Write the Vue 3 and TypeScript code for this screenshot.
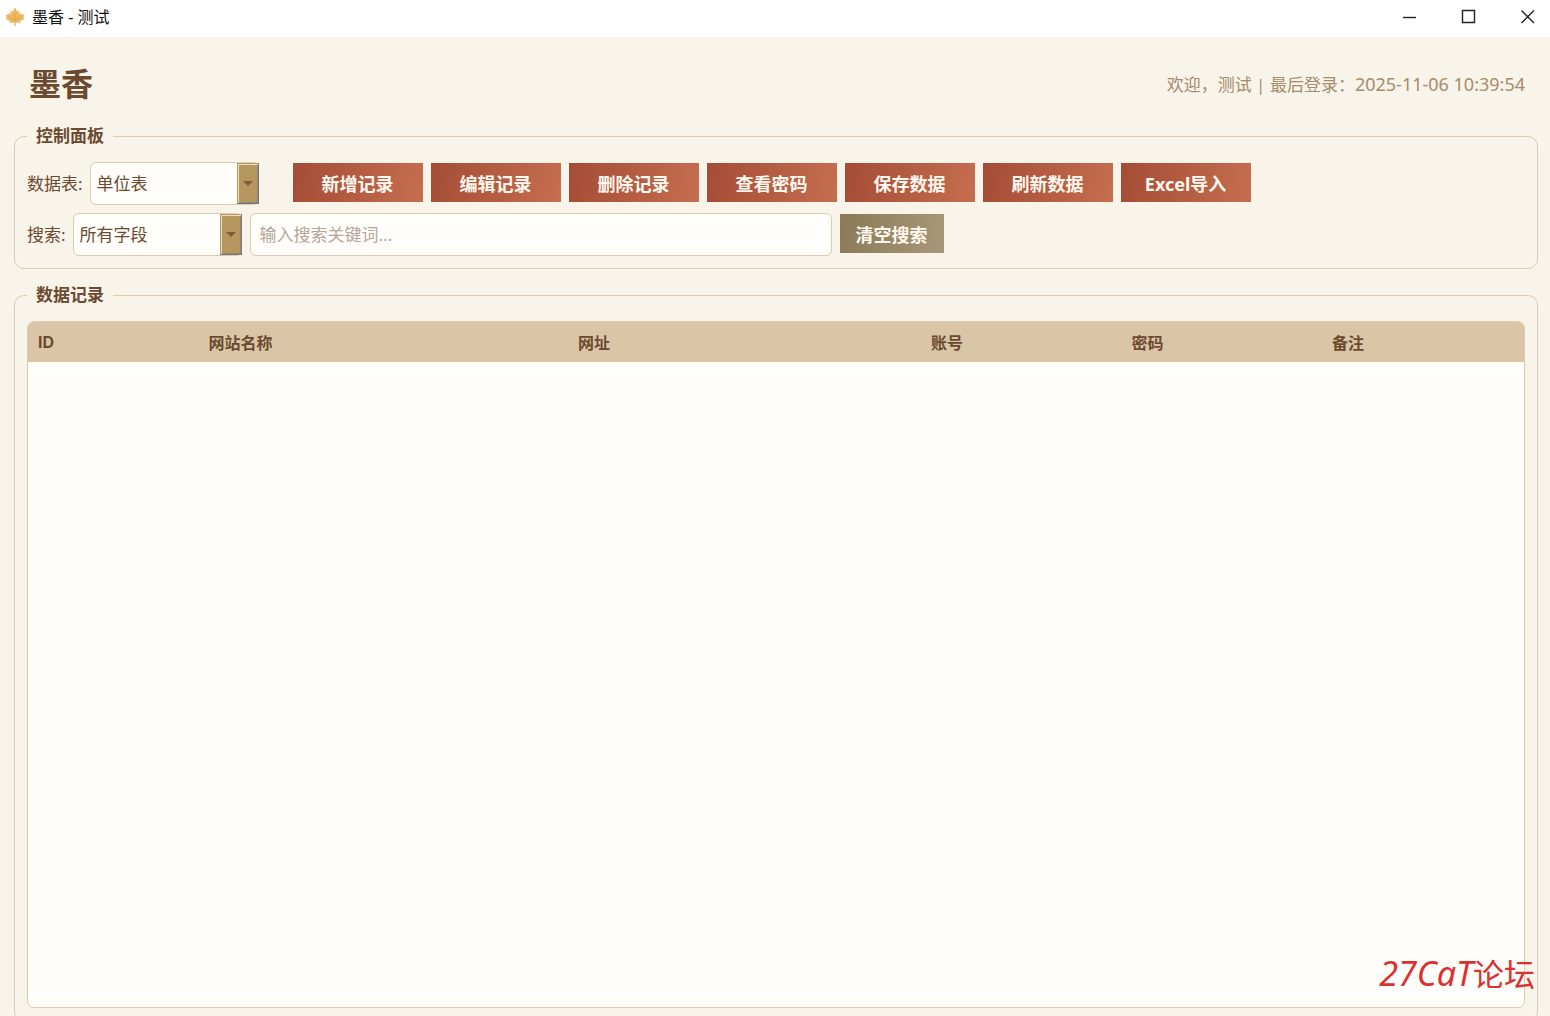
<script setup lang="ts">
import { ref } from 'vue'

interface Column {
  key: string
  label: string
  width: string
}

const tables: string[] = ['单位表']
const fields: string[] = ['所有字段']
const currentTable = ref<string>('单位表')
const currentField = ref<string>('所有字段')
const keyword = ref<string>('')

const actions: string[] = ['新增记录', '编辑记录', '删除记录', '查看密码', '保存数据', '刷新数据', 'Excel导入']

const columns: Column[] = [
  { key: 'id', label: 'ID', width: '11.4%' },
  { key: 'site', label: '网站名称', width: '24.7%' },
  { key: 'url', label: '网址', width: '23.6%' },
  { key: 'account', label: '账号', width: '13.4%' },
  { key: 'password', label: '密码', width: '13.4%' },
  { key: 'remark', label: '备注', width: '13.5%' },
]

function clearSearch(): void {
  keyword.value = ''
}
</script>

<template>
  <div class="window">
    <header class="titlebar">
      <svg class="leaf" viewBox="0 0 20 20" aria-hidden="true">
        <path
          d="M10 0.6 L12.2 4.4 L14.4 3.4 L14 7.6 L16 6 L16.6 7.8 L19.4 7.4 L18.4 10.4 L19.2 12 L15.2 14 L15.6 16 L10.7 15.4 L10.9 19 L9.3 19 L9.4 15.4 L4.4 16 L4.8 14 L0.8 12 L1.6 10.4 L0.6 7.4 L3.4 7.8 L4 6 L6 7.6 L5.6 3.4 L7.8 4.4 Z"
          fill="#edb861"
        />
        <path d="M10 15.4 V6 M10 14 L4.6 10 M10 14 L15.4 10" fill="none" stroke="#e2a246" stroke-width="0.8" />
      </svg>
      <span class="caption">墨香 - 测试</span>
      <div class="window-buttons">
        <button type="button" aria-label="最小化">
          <svg viewBox="0 0 16 16"><path d="M1 8.5 H14" /></svg>
        </button>
        <button type="button" aria-label="最大化">
          <svg viewBox="0 0 16 16"><path d="M1.5 1.5 H13.5 V13.5 H1.5 Z" /></svg>
        </button>
        <button type="button" aria-label="关闭">
          <svg viewBox="0 0 16 16"><path d="M1.5 1.5 L14 14 M14 1.5 L1.5 14" /></svg>
        </button>
      </div>
    </header>

    <main class="content">
      <div class="heading">
        <h1>墨香</h1>
        <p class="welcome">欢迎，测试 | 最后登录：<time>2025-11-06 10:39:54</time></p>
      </div>

      <fieldset class="panel controls">
        <legend>控制面板</legend>
        <div class="row">
          <label for="table-select">数据表:</label>
          <div class="combo">
            <select id="table-select" v-model="currentTable">
              <option v-for="t in tables" :key="t">{{ t }}</option>
            </select>
            <span class="drop"></span>
          </div>
          <div class="actions">
            <button v-for="a in actions" :key="a" type="button" class="btn">{{ a }}</button>
          </div>
        </div>
        <div class="row">
          <label for="field-select">搜索:</label>
          <div class="combo">
            <select id="field-select" v-model="currentField">
              <option v-for="f in fields" :key="f">{{ f }}</option>
            </select>
            <span class="drop"></span>
          </div>
          <input v-model="keyword" class="search" type="text" aria-label="搜索关键词" placeholder="输入搜索关键词..." />
          <button type="button" class="btn clear" @click="clearSearch">清空搜索</button>
        </div>
      </fieldset>

      <fieldset class="panel records">
        <legend>数据记录</legend>
        <div class="grid">
          <table>
            <thead>
              <tr>
                <th v-for="c in columns" :key="c.key" scope="col" :style="{ width: c.width }">{{ c.label }}</th>
              </tr>
            </thead>
            <tbody></tbody>
          </table>
        </div>
      </fieldset>
    </main>

    <div class="watermark">27CaT<span>论坛</span></div>
  </div>
</template>

<style>
body {
  margin: 0;
  overflow: hidden;
}
</style>

<style scoped>
* {
  box-sizing: border-box;
}

.window {
  position: relative;
  display: flex;
  flex-direction: column;
  height: 100vh;
  overflow: hidden;
  background: #f9f4ea;
  color: #6b4a30;
  font-family: 'Noto Sans', 'Noto Sans CJK SC', sans-serif;
  font-size: 17px;
}

.titlebar {
  display: flex;
  align-items: center;
  flex: none;
  height: 37px;
  padding: 0 0 4px 5px;
  background: #fff;
  color: #111;
  font-size: 16px;
}

.leaf {
  width: 20px;
  height: 20px;
  margin-right: 7px;
}

.caption {
  line-height: 24px;
}

.window-buttons {
  display: flex;
  margin-left: auto;
}

.window-buttons button {
  display: flex;
  align-items: center;
  justify-content: center;
  width: 59px;
  height: 33px;
  padding: 0 0 0 14px;
  border: 0;
  background: none;
}

.window-buttons svg {
  width: 16px;
  height: 16px;
  fill: none;
  stroke: #222;
  stroke-width: 1.4;
}

.content {
  display: flex;
  flex: 1;
  flex-direction: column;
  min-height: 0;
  margin-bottom: -5px;
  padding: 24px 12px 0 14px;
}

.heading {
  display: flex;
  align-items: center;
  justify-content: space-between;
  flex: none;
  height: 46px;
  margin-bottom: 16px;
  padding: 0 13px 0 15px;
}

h1 {
  margin: 0;
  font-size: 32px;
  line-height: 46px;
  font-weight: 700;
}

.welcome {
  margin: 0;
  color: #a58c6c;
  line-height: 26px;
}

.welcome time {
  font-size: 18px;
}

.panel {
  min-width: 0;
  margin: 0 0 13px;
  padding: 13px 12px 12px;
  border: 1px solid #dccbac;
  border-radius: 10px;
}

legend {
  height: 26px;
  padding: 0 9px;
  font-weight: 700;
  line-height: 26px;
}

.row {
  display: flex;
  align-items: center;
  gap: 8px;
}

.row + .row {
  margin-top: 8px;
}

label {
  flex: none;
  margin-right: -1px;
  line-height: 26px;
}

.combo {
  position: relative;
  flex: none;
  width: 169px;
  height: 43px;
}

select,
.search {
  height: 43px;
  border: 1px solid #dccbac;
  border-radius: 6px;
  background: #fffefa;
  color: inherit;
  font: inherit;
}

select {
  width: 100%;
  padding: 0 24px 0 6px;
  appearance: none;
}

.drop {
  position: absolute;
  top: 1px;
  right: 0;
  display: flex;
  align-items: center;
  justify-content: center;
  width: 22px;
  height: 41px;
  border: 1px solid;
  border-color: #b79a68 #77777a #77777a #b79a68;
  background: #b5975f;
  box-shadow: inset 1px 1px #f0dcb4, inset -1px -1px #948873;
  pointer-events: none;
}

.drop::after {
  border: 5px solid transparent;
  border-top-color: #7a5f35;
  border-bottom: 0;
  content: '';
}

.search {
  flex: 0 1 582px;
  min-width: 0;
  padding: 0 9px;
}

.search::placeholder {
  color: #b5a59b;
  opacity: 1;
}

.actions {
  display: flex;
  gap: 8px;
  margin-left: 26px;
}

.btn {
  width: 130px;
  height: 39px;
  margin: 0 0 2px;
  padding: 0;
  border: 0;
  background: linear-gradient(100deg, #a54c36, #c56e4f);
  color: #fff8ee;
  font: inherit;
  font-size: 18px;
  font-weight: 700;
}

.clear {
  width: 104px;
  background: linear-gradient(100deg, #8b7a55, #a8977a);
}

.records {
  display: flex;
  flex: 1;
  flex-direction: column;
  margin-bottom: 0;
}

.grid {
  flex: 1;
  overflow: hidden;
  border: 1px solid #dccbac;
  border-radius: 7px;
  background: #fffefa;
}

table {
  width: 100%;
  border-collapse: collapse;
  table-layout: fixed;
}

th {
  height: 40px;
  padding: 0 10px;
  background: #dac6a6;
  font-family: Inter, 'Noto Sans CJK SC', sans-serif;
  font-size: 16px;
  font-weight: 700;
  text-align: left;
}

.watermark {
  position: absolute;
  right: 15px;
  bottom: 18px;
  color: #dc3030;
  font-size: 34px;
  font-style: italic;
  line-height: 48px;
  pointer-events: none;
}

.watermark span {
  font-size: 31px;
  font-style: normal;
}
</style>
